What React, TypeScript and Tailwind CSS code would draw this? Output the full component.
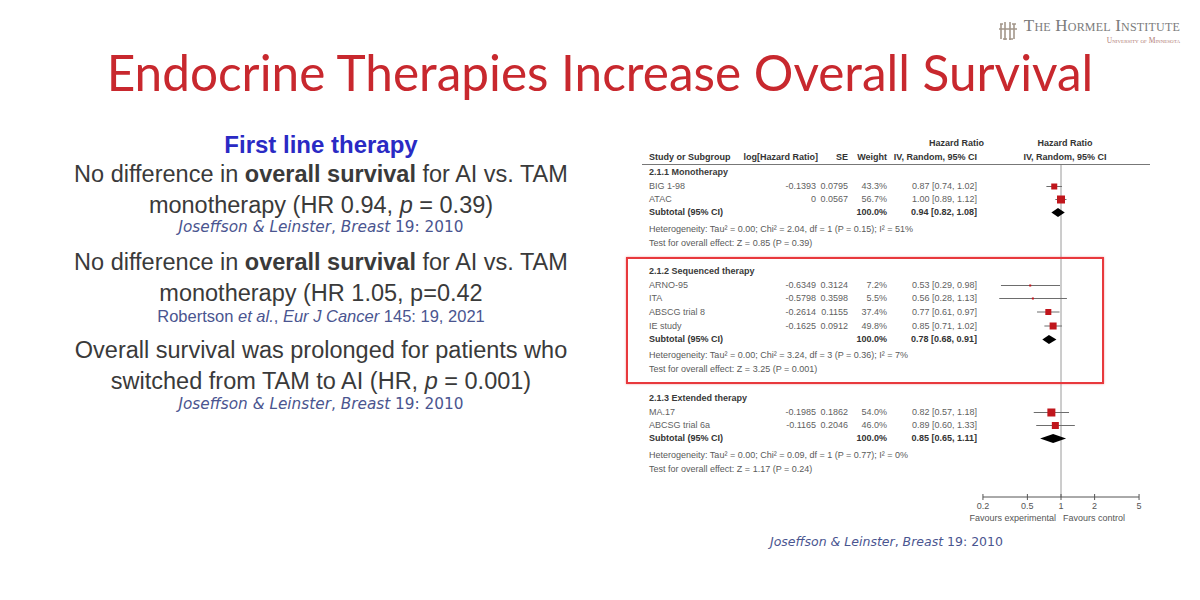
import React from 'react';

interface Row {
  kind: 'group' | 'study' | 'total' | 'note';
  label: string;
  log?: string;
  se?: string;
  weight?: string;
  ci?: string;
  hr?: number;
  lo?: number;
  hi?: number;
  box?: number;
  h: number;
  mt: number;
  cls: string;
}

const rows: Row[] = [
  { kind: 'group', label: '2.1.1 Monotherapy', h: 15, mt: 0, cls: 'h-[15px]' },
  { kind: 'study', label: 'BIG 1-98', log: '-0.1393', se: '0.0795', weight: '43.3%', ci: '0.87 [0.74, 1.02]', hr: 0.87, lo: 0.74, hi: 1.02, box: 6, h: 13, mt: 0, cls: 'h-[13px]' },
  { kind: 'study', label: 'ATAC', log: '0', se: '0.0567', weight: '56.7%', ci: '1.00 [0.89, 1.12]', hr: 1.0, lo: 0.89, hi: 1.12, box: 8, h: 13, mt: 0, cls: 'h-[13px]' },
  { kind: 'total', label: 'Subtotal (95% CI)', weight: '100.0%', ci: '0.94 [0.82, 1.08]', hr: 0.94, lo: 0.82, hi: 1.08, h: 13, mt: 0, cls: 'h-[13px]' },
  { kind: 'note', label: 'Heterogeneity: Tau² = 0.00; Chi² = 2.04, df = 1 (P = 0.15); I² = 51%', h: 14, mt: 3, cls: 'mt-[3px] h-[14px]' },
  { kind: 'note', label: 'Test for overall effect: Z = 0.85 (P = 0.39)', h: 14, mt: 0, cls: 'h-[14px]' },

  { kind: 'group', label: '2.1.2 Sequenced therapy', h: 15, mt: 14, cls: 'mt-[14px] h-[15px]' },
  { kind: 'study', label: 'ARNO-95', log: '-0.6349', se: '0.3124', weight: '7.2%', ci: '0.53 [0.29, 0.98]', hr: 0.53, lo: 0.29, hi: 0.98, box: 2, h: 13, mt: 0, cls: 'h-[13px]' },
  { kind: 'study', label: 'ITA', log: '-0.5798', se: '0.3598', weight: '5.5%', ci: '0.56 [0.28, 1.13]', hr: 0.56, lo: 0.28, hi: 1.13, box: 2, h: 13, mt: 0, cls: 'h-[13px]' },
  { kind: 'study', label: 'ABSCG trial 8', log: '-0.2614', se: '0.1155', weight: '37.4%', ci: '0.77 [0.61, 0.97]', hr: 0.77, lo: 0.61, hi: 0.97, box: 6, h: 14, mt: 0, cls: 'h-[14px]' },
  { kind: 'study', label: 'IE study', log: '-0.1625', se: '0.0912', weight: '49.8%', ci: '0.85 [0.71, 1.02]', hr: 0.85, lo: 0.71, hi: 1.02, box: 7, h: 14, mt: 0, cls: 'h-[14px]' },
  { kind: 'total', label: 'Subtotal (95% CI)', weight: '100.0%', ci: '0.78 [0.68, 0.91]', hr: 0.78, lo: 0.68, hi: 0.91, h: 13, mt: 0, cls: 'h-[13px]' },
  { kind: 'note', label: 'Heterogeneity: Tau² = 0.00; Chi² = 3.24, df = 3 (P = 0.36); I² = 7%', h: 14, mt: 2, cls: 'mt-[2px] h-[14px]' },
  { kind: 'note', label: 'Test for overall effect: Z = 3.25 (P = 0.001)', h: 14, mt: 0, cls: 'h-[14px]' },

  { kind: 'group', label: '2.1.3 Extended therapy', h: 15, mt: 15, cls: 'mt-[15px] h-[15px]' },
  { kind: 'study', label: 'MA.17', log: '-0.1985', se: '0.1862', weight: '54.0%', ci: '0.82 [0.57, 1.18]', hr: 0.82, lo: 0.57, hi: 1.18, box: 8, h: 13, mt: 0, cls: 'h-[13px]' },
  { kind: 'study', label: 'ABCSG trial 6a', log: '-0.1165', se: '0.2046', weight: '46.0%', ci: '0.89 [0.60, 1.33]', hr: 0.89, lo: 0.6, hi: 1.33, box: 7, h: 13, mt: 0, cls: 'h-[13px]' },
  { kind: 'total', label: 'Subtotal (95% CI)', weight: '100.0%', ci: '0.85 [0.65, 1.11]', hr: 0.85, lo: 0.65, hi: 1.11, h: 13, mt: 0, cls: 'h-[13px]' },
  { kind: 'note', label: 'Heterogeneity: Tau² = 0.00; Chi² = 0.09, df = 1 (P = 0.77); I² = 0%', h: 14, mt: 3, cls: 'mt-[3px] h-[14px]' },
  { kind: 'note', label: 'Test for overall effect: Z = 1.17 (P = 0.24)', h: 14, mt: 0, cls: 'h-[14px]' },
];

// log scale: 1 sits at x=81, 0.2 and 5 at the ends
const px = (v: number) => 81 + 48.5 * Math.log(v);
const AXIS_Y = 332;

const Logo = () => (
  <div className="flex items-center gap-[5px]">
    <svg width="22" height="22" viewBox="0 0 22 22" fill="none" stroke="#a3978a" strokeWidth="1.6">
      <path d="M4 4v15M8 2v18M13 2v18M17 4v15" />
      <path d="M2 9h18M3 4h3M15 4h4M6 19h4M12 19h4" />
    </svg>
    <div className="flex flex-col items-end font-['Liberation_Serif',serif] leading-none">
      <span className="text-[17px] text-[#7b7b7b] [font-variant:small-caps] tracking-[0.2px]">The Hormel Institute</span>
      <span className="mt-[3px] text-[7.5px] text-[#b07a74] [font-variant:small-caps]">University of Minnesota</span>
    </div>
  </div>
);

const Cite = ({ className = '' }: { className?: string }) => (
  <div className={`font-['DejaVu_Sans',sans-serif] text-[#4a5590] whitespace-nowrap ${className}`}>
    <i>Joseffson &amp; Leinster</i>, <i>Breast</i> 19: 2010
  </div>
);

const LeftText = () => (
  <div className="w-[642px] flex flex-col items-center text-center font-['Liberation_Sans',Arial,sans-serif] text-[#3a3a3a]">
    <div className="text-[24px] leading-[28px] font-bold text-[#2a2ac4]">First line therapy</div>
    <p className="text-[23.5px] leading-[31px]">
      No difference in <b>overall survival</b> for AI vs. TAM
      <br />
      monotherapy (HR 0.94, <i>p</i> = 0.39)
    </p>
    <Cite className="text-[15.3px] leading-[16px] -mt-[2px]" />

    <p className="mt-[12px] text-[23.5px] leading-[31px]">
      No difference in <b>overall survival</b> for AI vs. TAM
      <br />
      monotherapy (HR 1.05, p=0.42
    </p>
    <div className="-mt-[2px] text-[16.5px] leading-[18px] text-[#4a5590] whitespace-nowrap">
      Robertson <i>et al.</i>, <i>Eur J Cancer</i> 145: 19, 2021
    </div>

    <p className="mt-[10px] text-[23.5px] leading-[31px]">
      Overall survival was prolonged for patients who
      <br />
      switched from TAM to AI (HR, <i>p</i> = 0.001)
    </p>
    <Cite className="text-[15.3px] leading-[16px] -mt-[1px]" />
  </div>
);

const Num = ({ children }: { children?: React.ReactNode }) => (
  <span className="flex justify-end whitespace-nowrap">{children}</span>
);

const TableRow = ({ row }: { row: Row }) => {
  if (row.kind === 'group') {
    return <div className={`${row.cls} flex items-center pl-[7px] font-bold text-[#3a3a3a]`}>{row.label}</div>;
  }
  if (row.kind === 'note') {
    return <div className={`${row.cls} flex items-center pl-[7px] text-[#5a5a5a] whitespace-nowrap`}>{row.label}</div>;
  }
  const bold = row.kind === 'total';
  return (
    <div
      className={`${row.cls} grid grid-cols-[125px_49px_32px_39px_90px] items-center ${
        bold ? 'font-bold text-[#333]' : 'text-[#5f5f5f]'
      }`}
    >
      <span className="pl-[7px] whitespace-nowrap">{row.label}</span>
      <Num>{row.log}</Num>
      <Num>{row.se}</Num>
      <Num>{row.weight}</Num>
      <Num>{row.ci}</Num>
    </div>
  );
};

const Plot = () => {
  let acc = 0;
  const marks = rows.map((r, i) => {
    const y = acc + r.mt + r.h / 2;
    acc += r.mt + r.h;
    if (r.hr === undefined || r.lo === undefined || r.hi === undefined) return null;
    const x = px(r.hr);
    const x1 = Math.max(px(r.lo), 0);
    const x2 = px(r.hi);
    if (r.kind === 'total') {
      return (
        <polygon key={i} points={`${x1},${y} ${x},${y - 4.5} ${x2},${y} ${x},${y + 4.5}`} fill="#000" />
      );
    }
    const s = r.box ?? 4;
    return (
      <g key={i}>
        <line x1={x1} y1={y} x2={x2} y2={y} stroke="#6d6d6d" strokeWidth="1" />
        <rect x={x - s / 2} y={y - s / 2} width={s} height={s} fill="#c0161c" />
      </g>
    );
  });

  const ticks = [0.2, 0.5, 1, 2, 5];
  return (
    <svg width="170" height="362" className="overflow-visible font-['Liberation_Sans',Arial,sans-serif]">
      <line x1="81" y1="0" x2="81" y2={AXIS_Y} stroke="#9a9a9a" strokeWidth="1" />
      {marks}
      <line x1={px(0.2)} y1={AXIS_Y} x2={px(5)} y2={AXIS_Y} stroke="#555" strokeWidth="1" />
      {ticks.map((t) => (
        <g key={t}>
          <line x1={px(t)} y1={AXIS_Y - 3} x2={px(t)} y2={AXIS_Y + 3} stroke="#555" strokeWidth="1" />
          <text x={px(t)} y={AXIS_Y + 12} textAnchor="middle" fontSize="9" fill="#555">
            {t}
          </text>
        </g>
      ))}
      <text x="76" y={AXIS_Y + 24} textAnchor="end" fontSize="9" fill="#555">
        Favours experimental
      </text>
      <text x="83" y={AXIS_Y + 24} textAnchor="start" fontSize="9" fill="#555">
        Favours control
      </text>
    </svg>
  );
};

const ForestPlot = () => (
  <div className="relative flex font-['Liberation_Sans',Arial,sans-serif] text-[9px] leading-none">
    <div className="w-[338px] flex flex-col">
      <div className="h-[29px] flex flex-col border-b border-[#777] font-bold text-[#333]">
        <div className="h-[14px] flex items-center justify-end -mr-[4px]">Hazard Ratio</div>
        <div className="h-[14px] grid grid-cols-[125px_51px_30px_39px_90px] items-center">
          <span className="pl-[7px] whitespace-nowrap">Study or Subgroup</span>
          <Num>log[Hazard Ratio]</Num>
          <Num>SE</Num>
          <Num>Weight</Num>
          <Num>IV, Random, 95% CI</Num>
        </div>
      </div>
      {rows.map((r, i) => (
        <TableRow key={i} row={r} />
      ))}
    </div>
    <div className="w-[170px] flex flex-col">
      <div className="h-[29px] flex flex-col items-center border-b border-[#777] font-bold text-[#333]">
        <div className="h-[14px] flex items-center">Hazard Ratio</div>
        <div className="h-[14px] flex items-center">IV, Random, 95% CI</div>
      </div>
      <Plot />
    </div>
    {/* presenter's highlight box */}
    <div className="absolute left-[-16px] top-[121px] w-[478px] h-[127px] border-[2.5px] border-[#e8393d] shadow-[0_0_2px_rgba(232,57,61,0.5)]" />
  </div>
);

export default function App() {
  return (
    <div className="w-[1200px] h-[600px] bg-white overflow-hidden">
      <div className="h-[47px] flex justify-end pt-[14px] pr-[20px]">
        <Logo />
      </div>
      <h1 className="h-[84px] text-center font-['Lato',sans-serif] font-normal text-[49.5px] leading-[50px] text-[#c8282e]">
        Endocrine Therapies Increase Overall Survival
      </h1>
      <div className="flex">
        <LeftText />
        <div className="flex flex-col pt-[5px]">
          <ForestPlot />
          <Cite className="ml-[128px] mt-[8px] text-[12.5px] leading-[14px]" />
        </div>
      </div>
    </div>
  );
}
